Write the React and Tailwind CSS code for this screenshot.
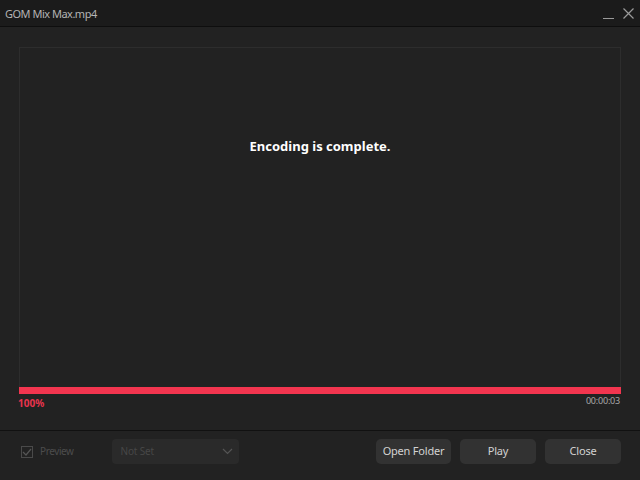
import React from "react";

const App = () => {
  return (
    <div
      className="w-[640px] h-[480px] bg-[#222222] flex flex-col overflow-hidden"
      style={{ fontFamily: '"Noto Sans", "Open Sans", sans-serif' }}
    >
      {/* title bar */}
      <div className="h-[27px] bg-[#1b1b1b] border-b border-[#0e0e0e] flex items-center justify-between pl-[5px] pr-[6px]">
        <span className="text-[11px] tracking-[-0.5px] text-[#b4b4b4] leading-none">GOM Mix Max.mp4</span>
        <div className="flex items-center gap-[9px]">
          <svg width="11" height="11" viewBox="0 0 11 11">
            <path d="M0 10.5H11" stroke="#9a9a9a" strokeWidth="1" />
          </svg>
          <svg width="11" height="11" viewBox="0 0 11 11">
            <path d="M0.5 0.5L10.5 10.5M10.5 0.5L0.5 10.5" stroke="#9a9a9a" strokeWidth="1.2" />
          </svg>
        </div>
      </div>

      {/* content */}
      <div className="flex-1 flex flex-col px-[19px] pt-[20px]">
        <div className="h-[347px] border border-[#2d2d2d] border-b-0 flex flex-col">
          <div className="flex-1 flex justify-center pt-[92px]">
            <span className="text-[13px] font-bold text-white leading-none">Encoding is complete.</span>
          </div>
          <div className="h-[7px] bg-[#f2354f] -mx-px"></div>
        </div>
        <div className="flex justify-between items-start mt-[2px] -mx-px">
          <span className="text-[10px] font-bold text-[#e8344d] leading-none pt-[2px]">100%</span>
          <span className="text-[9px] tracking-[-0.2px] text-[#a8a8a8] leading-none pr-[2px]">00:00:03</span>
        </div>
      </div>

      {/* bottom bar */}
      <div className="h-[50px] border-t border-[#111111] flex items-start px-[19px] pt-[8px]">
        <div className="flex items-center gap-[7px] pl-[2px] h-[25px]">
          <div className="w-[12px] h-[12px] border border-[#4a4a4a] flex items-center justify-center">
            <svg width="10" height="8" viewBox="0 0 10 8">
              <path d="M1 4L4 7L9 1" fill="none" stroke="#555555" strokeWidth="1.2" />
            </svg>
          </div>
          <span className="text-[10px] tracking-[-0.4px] text-[#4c4c4c]">Preview</span>
        </div>
        <div className="ml-[38px] w-[127px] h-[25px] rounded-[4px] bg-[#2a2a2a] flex items-center justify-between pl-[9px] pr-[6px]">
          <span className="text-[10px] tracking-[-0.2px] text-[#474747]">Not Set</span>
          <svg width="11" height="7" viewBox="0 0 11 7">
            <path d="M1 1L5.5 5.5L10 1" fill="none" stroke="#555555" strokeWidth="1.2" />
          </svg>
        </div>
        <div className="ml-auto flex gap-[9px]">
          <button className="w-[75px] h-[25px] rounded-[5px] bg-[#323232] text-[11px] tracking-[-0.2px] text-[#d2d2d2]">Open Folder</button>
          <button className="w-[76px] h-[25px] rounded-[5px] bg-[#323232] text-[11px] tracking-[-0.2px] text-[#d2d2d2]">Play</button>
          <button className="w-[76px] h-[25px] rounded-[5px] bg-[#323232] text-[11px] tracking-[-0.2px] text-[#d2d2d2]">Close</button>
        </div>
      </div>
    </div>
  );
};

export default App;
